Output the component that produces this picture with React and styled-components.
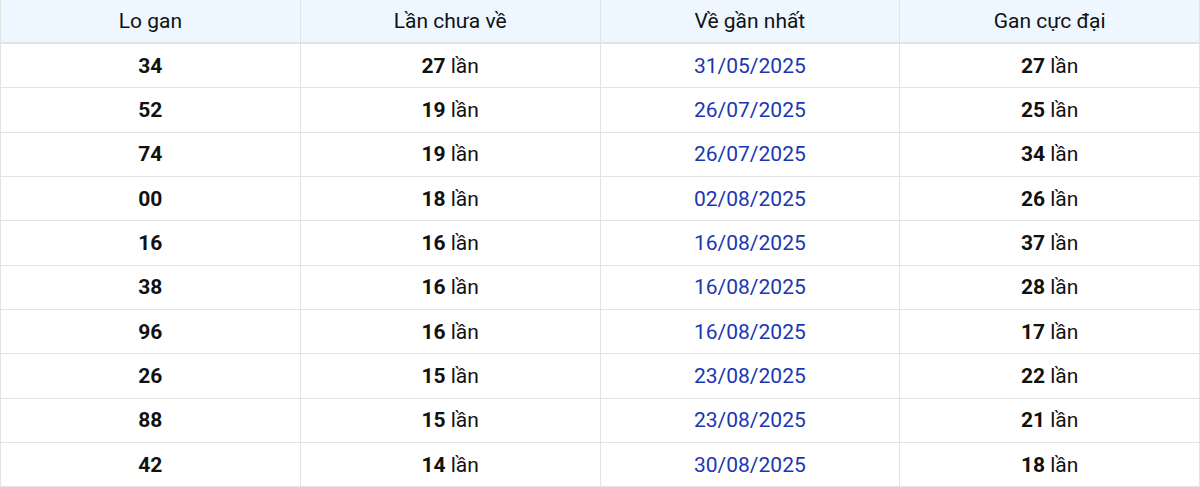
import React from 'react';
import styled, { createGlobalStyle } from 'styled-components';

const GlobalStyle = createGlobalStyle`
    html, body {
        margin: 0;
        padding: 0;
        background: #fff;
    }
    body {
        font-family: Roboto, "Liberation Sans", Arial, sans-serif;
    }
`;

const Table = styled.table`
    width: 1200px;
    border-collapse: collapse;
    table-layout: fixed;
    font-size: 21px;
    color: #111;
`;

const HeadCell = styled.th`
    height: 42px;
    padding: 0;
    font-weight: 400;
    text-align: center;
    background: #eef6ff;
    border-left: 1px solid #e3e3e3;
    border-right: 1px solid #e3e3e3;
    border-bottom: 2px solid #e3e3e3;
`;

const Cell = styled.td`
    height: 43.35px;
    padding: 0;
    text-align: center;
    border: 1px solid #e3e3e3;
    border-top: 0;
    color: ${props => (props.date ? '#1a37b3' : '#111')};
`;

const Num = styled.b`
    font-weight: 700;
`;

const rows = [
	['34', 27, '31/05/2025', 27],
	['52', 19, '26/07/2025', 25],
	['74', 19, '26/07/2025', 34],
	['00', 18, '02/08/2025', 26],
	['16', 16, '16/08/2025', 37],
	['38', 16, '16/08/2025', 28],
	['96', 16, '16/08/2025', 17],
	['26', 15, '23/08/2025', 22],
	['88', 15, '23/08/2025', 21],
	['42', 14, '30/08/2025', 18],
];

const Times = ({ n }) => (
	<>
		<Num>{n}</Num> lần
	</>
);

const App = () => (
	<>
		<GlobalStyle />
		<Table>
			<thead>
				<tr>
					<HeadCell>Lo gan</HeadCell>
					<HeadCell>Lần chưa về</HeadCell>
					<HeadCell>Về gần nhất</HeadCell>
					<HeadCell>Gan cực đại</HeadCell>
				</tr>
			</thead>
			<tbody>
				{rows.map(([lo, miss, date, max]) => (
					<tr key={lo}>
						<Cell><Num>{lo}</Num></Cell>
						<Cell><Times n={miss} /></Cell>
						<Cell date>{date}</Cell>
						<Cell><Times n={max} /></Cell>
					</tr>
				))}
			</tbody>
		</Table>
	</>
);

export default App;
